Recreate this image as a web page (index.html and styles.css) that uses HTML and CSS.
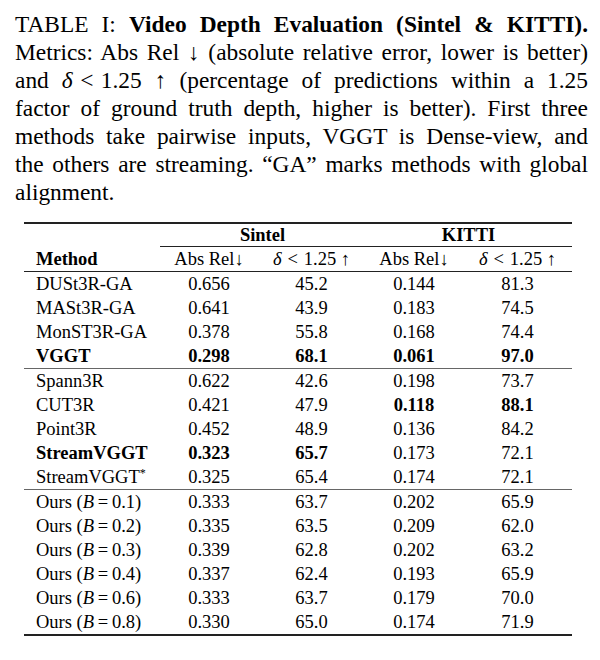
FILE: index.html
```html
<!DOCTYPE html>
<html lang="en">

<head>
    <meta charset="UTF-8">
    <meta name="viewport" content="width=device-width, initial-scale=1.0">
    <title>Video Depth Evaluation</title>

    <link rel="stylesheet" href="styles.css">
</head>

<body>

    <div class="page">

        <!-- caption lines are set by hand to follow the paper's line breaks -->
        <p class="caption">
            <span class="line">TABLE I: <b>Video Depth Evaluation (Sintel &amp; KITTI).</b></span>
            <span class="line">Metrics: Abs Rel &darr; (absolute relative error, lower is better)</span>
            <span class="line">and <i>&delta;</i><span class="rel">&lt;</span>1.25 &uarr; (percentage of predictions within a 1.25</span>
            <span class="line">factor of ground truth depth, higher is better). First three</span>
            <span class="line">methods take pairwise inputs, VGGT is Dense-view, and</span>
            <span class="line">the others are streaming. &ldquo;GA&rdquo; marks methods with global</span>
            <span class="line end">alignment.</span>
        </p>

        <table class="results">
            <colgroup>
                <col class="col-method">
                <col class="col-abs">
                <col class="col-delta">
                <col class="col-abs">
                <col class="col-delta2">
            </colgroup>
            <thead>
                <tr class="head-top">
                    <th></th>
                    <th colspan="2" class="group">Sintel</th>
                    <th colspan="2" class="group">KITTI</th>
                </tr>
                <tr class="head-sub">
                    <th class="name">Method</th>
                    <td>Abs Rel&darr;</td>
                    <td><i>&delta;</i><span class="rel">&lt;</span>1.25 &uarr;</td>
                    <td>Abs Rel&darr;</td>
                    <td><i>&delta;</i><span class="rel">&lt;</span>1.25 &uarr;</td>
                </tr>
            </thead>
            <tbody>
                <tr><td class="name">DUSt3R-GA</td><td>0.656</td><td>45.2</td><td>0.144</td><td>81.3</td></tr>
                <tr><td class="name">MASt3R-GA</td><td>0.641</td><td>43.9</td><td>0.183</td><td>74.5</td></tr>
                <tr><td class="name">MonST3R-GA</td><td>0.378</td><td>55.8</td><td>0.168</td><td>74.4</td></tr>
                <tr class="best group-end"><td class="name">VGGT</td><td>0.298</td><td>68.1</td><td>0.061</td><td>97.0</td></tr>

                <tr><td class="name">Spann3R</td><td>0.622</td><td>42.6</td><td>0.198</td><td>73.7</td></tr>
                <tr><td class="name">CUT3R</td><td>0.421</td><td>47.9</td><td><b>0.118</b></td><td><b>88.1</b></td></tr>
                <tr><td class="name">Point3R</td><td>0.452</td><td>48.9</td><td>0.136</td><td>84.2</td></tr>
                <tr><td class="name"><b>StreamVGGT</b></td><td><b>0.323</b></td><td><b>65.7</b></td><td>0.173</td><td>72.1</td></tr>
                <tr class="group-end"><td class="name">StreamVGGT<sup>*</sup></td><td>0.325</td><td>65.4</td><td>0.174</td><td>72.1</td></tr>

                <tr><td class="name">Ours (<i>B</i><span class="eq">=</span>0.1)</td><td>0.333</td><td>63.7</td><td>0.202</td><td>65.9</td></tr>
                <tr><td class="name">Ours (<i>B</i><span class="eq">=</span>0.2)</td><td>0.335</td><td>63.5</td><td>0.209</td><td>62.0</td></tr>
                <tr><td class="name">Ours (<i>B</i><span class="eq">=</span>0.3)</td><td>0.339</td><td>62.8</td><td>0.202</td><td>63.2</td></tr>
                <tr><td class="name">Ours (<i>B</i><span class="eq">=</span>0.4)</td><td>0.337</td><td>62.4</td><td>0.193</td><td>65.9</td></tr>
                <tr><td class="name">Ours (<i>B</i><span class="eq">=</span>0.6)</td><td>0.333</td><td>63.7</td><td>0.179</td><td>70.0</td></tr>
                <tr class="last"><td class="name">Ours (<i>B</i><span class="eq">=</span>0.8)</td><td>0.330</td><td>65.0</td><td>0.174</td><td>71.9</td></tr>
            </tbody>
        </table>

    </div>

</body>

</html>
```

FILE: styles.css
```css
*,
*::before,
*::after {
    margin: 0;
    padding: 0;
    box-sizing: border-box;
}

body {
    background-color: #fff;
    color: #000;
    font-family: "Liberation Serif", "Times New Roman", serif;
}

.page {
    width: 600px;
    padding: 10px 12px 0 15px;
}

.caption {
    width: 573px;
    font-size: 23.4px;
    line-height: 28px;
}

.caption .line {
    display: block;
    text-align: justify;
    text-align-last: justify;
}

.caption .line.end {
    text-align-last: left;
}

/* math relation spacing, like TeX's thick space */
.rel {
    padding: 0 0.32em;
}

.eq {
    padding: 0 0.2em;
}

.results {
    margin: 16px 0 0 9px;
    width: 548px;
    table-layout: fixed;
    border-collapse: separate;
    border-spacing: 0;
    font-size: 18.5px;
}

.col-method {
    width: 136px;
}

.col-abs {
    width: 98px;
}

.col-delta {
    width: 107px;
}

.col-delta2 {
    width: 109px;
}

.results th,
.results td {
    padding: 0;
    text-align: center;
    line-height: 24px;
    white-space: nowrap;
}

.results th {
    font-weight: bold;
}

.results .name {
    text-align: left;
    padding-left: 12px;
}

.head-top th {
    border-top: 2px solid #222;
    line-height: 22px;
}

.head-top .group {
    border-bottom: 1px solid #222;
}

.head-sub th,
.head-sub td {
    border-bottom: 1px solid #222;
}

.best td {
    font-weight: bold;
}

.group-end td {
    border-bottom: 1px solid #666;
}

.last td {
    border-bottom: 2px solid #222;
}

.results sup {
    font-size: 12px;
    line-height: 0;
    vertical-align: 6px;
}
```
